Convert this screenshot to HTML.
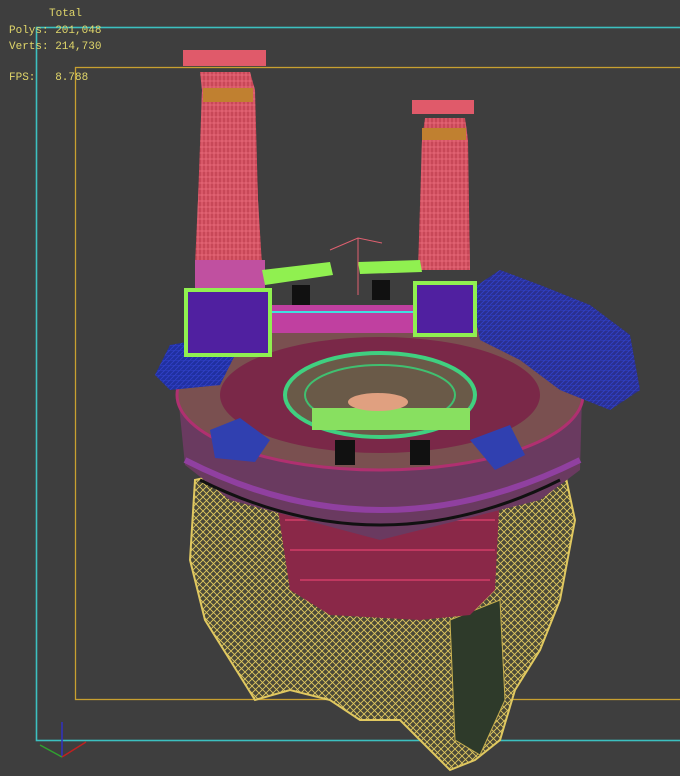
<!DOCTYPE html>
<html><head><style>
html,body{margin:0;padding:0;background:#3e3e3e;width:680px;height:776px;overflow:hidden}
.t{position:absolute;font-family:"Liberation Mono",monospace;font-size:11px;color:#e0d66a;white-space:pre;line-height:12px}
</style></head><body>
<svg width="680" height="776" style="position:absolute;left:0;top:0">
<defs>
<pattern id="wy" width="7" height="7" patternUnits="userSpaceOnUse"><path d="M0 7L7 0M0 0L7 7" stroke="#e0c860" stroke-width="0.9"/></pattern>
<pattern id="wr" width="4" height="6" patternUnits="userSpaceOnUse"><path d="M2 0V6M0 3H4" stroke="#f07080" stroke-width="0.8"/></pattern>
<pattern id="wb" width="5" height="5" patternUnits="userSpaceOnUse"><path d="M0 5L5 0M0 0H5" stroke="#3040c8" stroke-width="0.9"/></pattern>
</defs>
<rect x="36.5" y="27.5" width="700" height="713" fill="none" stroke="#3cc0c0" stroke-width="1.6"/>
<rect x="75.5" y="67.5" width="700" height="632" fill="none" stroke="#c8a030" stroke-width="1.3"/>
<!-- rock -->
<path d="M195 480 L240 470 L300 520 L420 540 L520 470 L560 450 L575 520 L560 600 L540 650 L515 690 L500 740 L475 760 L450 770 L430 750 L400 720 L360 720 L330 700 L290 690 L255 700 L230 660 L205 620 L190 560 Z" fill="#4a4838"/>
<path d="M195 480 L240 470 L300 520 L420 540 L520 470 L560 450 L575 520 L560 600 L540 650 L515 690 L500 740 L475 760 L450 770 L430 750 L400 720 L360 720 L330 700 L290 690 L255 700 L230 660 L205 620 L190 560 Z" fill="url(#wy)" stroke="#e0c860" stroke-width="2"/>
<path d="M450 620 L500 600 L505 700 L480 755 L455 740 Z" fill="#2e3a2a" stroke="#c8b050"/>
<!-- brick cylinder -->
<path d="M275 490 L500 490 L495 590 L470 615 L420 620 L330 615 L290 590 Z" fill="#8a2848"/>
<path d="M285 520H495M290 550H495M300 580H490" stroke="#c03860" stroke-width="2"/>
<!-- platform side -->
<path d="M178 395 L582 395 L580 470 L540 500 L380 540 L230 500 L185 465 Z" fill="#6a3a60"/>
<path d="M185 460 Q380 560 580 460" fill="none" stroke="#9040a0" stroke-width="6"/>
<path d="M200 480 Q380 570 560 480" fill="none" stroke="#111" stroke-width="3"/>
<!-- platform top -->
<ellipse cx="380" cy="395" rx="203" ry="75" fill="#7a5050"/>
<ellipse cx="380" cy="395" rx="203" ry="75" fill="none" stroke="#b03070" stroke-width="3"/>
<ellipse cx="380" cy="395" rx="160" ry="58" fill="#7a2848"/>
<ellipse cx="380" cy="395" rx="95" ry="42" fill="#6a5a48" stroke="#40d080" stroke-width="4"/>
<ellipse cx="380" cy="395" rx="75" ry="30" fill="none" stroke="#40c070" stroke-width="2"/>
<rect x="312" y="408" width="158" height="22" fill="#88e060"/>
<ellipse cx="378" cy="402" rx="30" ry="9" fill="#e0a080"/>
<!-- blue rocks -->
<path d="M155 375 L170 345 L210 338 L235 355 L220 385 L170 390 Z" fill="#2030a0"/><path d="M155 375 L170 345 L210 338 L235 355 L220 385 L170 390 Z" fill="url(#wb)"/>
<path d="M470 290 L500 270 L540 285 L590 305 L630 335 L640 390 L610 410 L560 390 L520 360 L480 340 Z" fill="#2a3090"/><path d="M470 290 L500 270 L540 285 L590 305 L630 335 L640 390 L610 410 L560 390 L520 360 L480 340 Z" fill="url(#wb)"/>
<path d="M210 430 L240 418 L270 440 L255 462 L215 458 Z" fill="#3040b0"/>
<path d="M470 440 L510 425 L525 455 L495 470 Z" fill="#3040b0"/>
<!-- rail -->
<rect x="265" y="305" width="150" height="28" fill="#c040a0"/>
<path d="M265 312H415" stroke="#40e0e0" stroke-width="2"/>
<!-- pillars -->
<rect x="183" y="50" width="83" height="16" fill="#e05a6a"/>
<path d="M200 72 L250 72 L255 90 L258 200 L262 265 L195 265 L198 200 L202 90 Z" fill="#c84858"/>
<path d="M200 72 L250 72 L255 90 L258 200 L262 265 L195 265 L198 200 L202 90 Z" fill="url(#wr)"/>
<rect x="203" y="88" width="50" height="14" fill="#c08030"/>
<rect x="195" y="260" width="70" height="30" fill="#c050a0"/>
<rect x="412" y="100" width="62" height="14" fill="#e05a6a"/>
<path d="M425 118 L465 118 L468 140 L470 270 L418 270 L422 140 Z" fill="#c84858"/>
<path d="M425 118 L465 118 L468 140 L470 270 L418 270 L422 140 Z" fill="url(#wr)"/>
<rect x="422" y="128" width="44" height="12" fill="#c08030"/>
<!-- boxes -->
<rect x="186" y="290" width="84" height="65" fill="#5020a0" stroke="#90f050" stroke-width="4"/>
<rect x="415" y="283" width="60" height="52" fill="#5020a0" stroke="#90f050" stroke-width="4"/>
<!-- bars -->
<path d="M262 270 L330 262 L333 275 L265 285 Z" fill="#90f050"/>
<path d="M358 262 L420 260 L422 272 L360 274 Z" fill="#90f050"/>
<rect x="292" y="285" width="18" height="20" fill="#111"/>
<rect x="372" y="280" width="18" height="20" fill="#111"/>
<rect x="335" y="440" width="20" height="25" fill="#111"/>
<rect x="410" y="440" width="20" height="25" fill="#111"/>
<path d="M358 238V295M330 250L358 238L382 243" stroke="#e06070" fill="none"/>
<!-- axis -->
<path d="M62 757V722" stroke="#3030c0" stroke-width="1.5"/>
<path d="M62 757L86 742" stroke="#c02020" stroke-width="1.5"/>
<path d="M62 757L40 745" stroke="#30a030" stroke-width="1.5"/>
</svg>
<div class="t" style="left:49px;top:8px">Total</div>
<div class="t" style="left:9px;top:25px">Polys: 201,048</div>
<div class="t" style="left:9px;top:41px">Verts: 214,730</div>
<div class="t" style="left:9px;top:72px">FPS:   8.788</div>
</body></html>
